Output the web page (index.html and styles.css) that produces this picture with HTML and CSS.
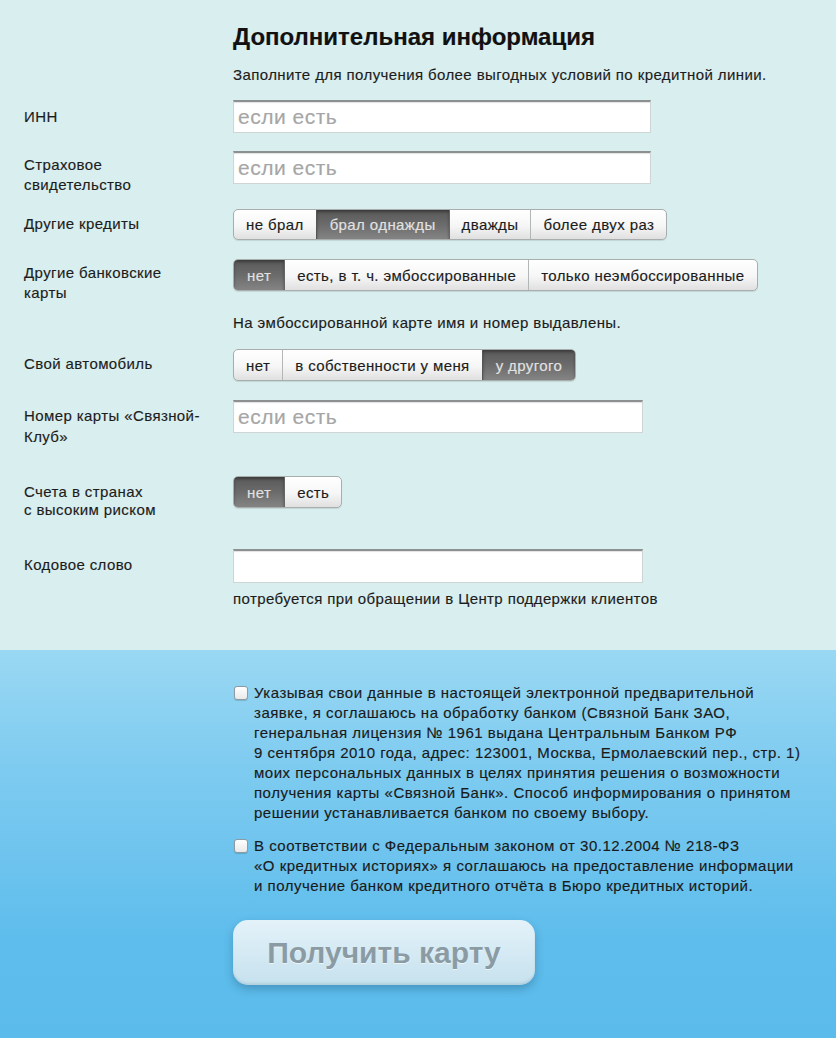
FILE: index.html
```html
<!DOCTYPE html>
<html lang="ru">
<head>
<meta charset="utf-8">
<title>Дополнительная информация</title>
<link rel="stylesheet" href="styles.css">
</head>
<body>
<div class="page">
  <section class="info">
    <div class="head">
      <h1 class="title">Дополнительная информация</h1>
      <p class="lead">Заполните для получения более выгодных условий по кредитной линии.</p>
    </div>

    <div class="row r-inn">
      <div class="label">ИНН</div>
      <input class="field w418" type="text" placeholder="если есть">
    </div>

    <div class="row r-snils">
      <div class="label">Страховое<br>свидетельство</div>
      <input class="field w418" type="text" placeholder="если есть">
    </div>

    <div class="row r-credits">
      <div class="label">Другие кредиты</div>
      <div class="seg seg-31">
        <span class="opt">не брал</span><span class="opt on">брал однажды</span><span class="opt">дважды</span><span class="opt">более двух раз</span>
      </div>
    </div>

    <div class="row r-cards">
      <div class="label">Другие банковские<br>карты</div>
      <div class="seg">
        <span class="opt on">нет</span><span class="opt">есть, в т. ч. эмбоссированные</span><span class="opt">только неэмбоссированные</span>
      </div>
    </div>
    <p class="note">На эмбоссированной карте имя и номер выдавлены.</p>

    <div class="row r-car">
      <div class="label">Свой автомобиль</div>
      <div class="seg">
        <span class="opt">нет</span><span class="opt">в собственности у меня</span><span class="opt on">у другого</span>
      </div>
    </div>

    <div class="row r-club">
      <div class="label">Номер карты «Связной-<br>Клуб»</div>
      <input class="field w410" type="text" placeholder="если есть">
    </div>

    <div class="row r-risk">
      <div class="label">Счета в странах<br>с высоким риском</div>
      <div class="seg">
        <span class="opt on">нет</span><span class="opt">есть</span>
      </div>
    </div>

    <div class="row r-code">
      <div class="label">Кодовое слово</div>
      <input class="field w410 tall" type="text">
    </div>
    <p class="hint">потребуется при обращении в Центр поддержки клиентов</p>
  </section>

  <section class="agree">
    <label class="check">
      <span class="box"></span>
      <span class="check-text">Указывая свои данные в настоящей электронной предварительной<br>заявке, я соглашаюсь на обработку банком (Связной Банк ЗАО,<br>генеральная лицензия № 1961 выдана Центральным Банком РФ<br>9 сентября 2010 года, адрес: 123001, Москва, Ермолаевский пер., стр. 1)<br>моих персональных данных в целях принятия решения о возможности<br>получения карты «Связной Банк». Способ информирования о принятом<br>решении устанавливается банком по своему выбору.</span>
    </label>
    <label class="check">
      <span class="box"></span>
      <span class="check-text">В соответствии с Федеральным законом от 30.12.2004 № 218-ФЗ<br>«О кредитных историях» я соглашаюсь на предоставление информации<br>и получение банком кредитного отчёта в Бюро кредитных историй.</span>
    </label>
    <button class="submit" type="button">Получить карту</button>
  </section>
</div>
</body>
</html>
```

FILE: styles.css
```css
* { box-sizing: border-box; }
html, body {
  margin: 0;
  padding: 0;
}
body {
  font-family: "Liberation Sans", Arial, sans-serif;
  font-size: 15px;
  letter-spacing: 0.4px;
  color: #1c1c1c;
  background: #5bbcec;
  -webkit-text-stroke: 0.15px currentColor;
}
.page {
  width: 836px;
  min-height: 1038px;
  display: flex;
  flex-direction: column;
}
.info {
  background: #d9eeee;
  padding: 0 0 0 24px;
  height: 650px;
}
.head {
  padding: 23px 0 0 209px;
}
.title {
  margin: 0;
  font-size: 24px;
  line-height: 28px;
  font-weight: bold;
  letter-spacing: 0;
  color: #111;
}
.lead {
  margin: 15px 0 0;
  line-height: 18px;
}
.row {
  display: grid;
  grid-template-columns: 209px max-content;
  align-items: start;
}
.label {
  line-height: 20px;
  white-space: nowrap;
}
.r-inn { margin-top: 16px; height: 33px; }
.r-inn .label { padding-top: 7px; }
.r-snils { margin-top: 18px; height: 33px; }
.r-snils .label { padding-top: 4px; }
.r-credits { margin-top: 25px; height: 31px; }
.r-credits .label { padding-top: 5px; }
.r-cards { margin-top: 19px; height: 32px; }
.r-cards .label { padding-top: 4px; }
.r-car { margin-top: 17px; height: 32px; }
.r-car .label { padding-top: 5px; }
.r-club { margin-top: 19px; height: 33px; }
.r-club .label { padding-top: 5px; line-height: 21px; }
.r-risk { margin-top: 43px; height: 32px; }
.r-risk .label { padding-top: 7px; line-height: 18px; }
.r-code { margin-top: 41px; height: 34px; }
.r-code .label { padding-top: 6px; }

.field {
  display: block;
  height: 33px;
  border: 1px solid #cfd4d4;
  border-top: 2px solid #8c9090;
  box-shadow: inset 0 1px 1px rgba(0,0,0,0.12);
  background: #fff;
  font-family: "Liberation Sans", Arial, sans-serif;
  font-size: 21px;
  letter-spacing: 0.5px;
  padding: 0 4px;
  color: #333;
  outline: none;
}
.field.tall { height: 34px; }
.field::placeholder { color: #a6a6a6; }
.w418 { width: 418px; }
.w410 { width: 410px; }

.seg {
  display: flex;
  height: 32px;
  border: 1px solid #a9adad;
  border-radius: 5px;
  overflow: hidden;
  background: linear-gradient(#ffffff, #f6f6f6 55%, #e0e0e0);
  box-shadow: 0 1px 1px rgba(0,0,0,0.1);
}
.seg-31 { height: 31px; }
.opt {
  display: flex;
  align-items: center;
  padding: 0 12px;
  color: #1c1c1c;
  border-left: 1px solid #b3b6b6;
}
.opt:first-child { border-left: 0; }
.opt.on {
  padding: 0 13px;
  background: linear-gradient(#595959, #6b6b6b 50%, #848484);
  color: #e2e2e2;
  border-left-color: #555;
  box-shadow: inset 0 2px 3px rgba(0,0,0,0.35);
}
.opt.on + .opt { border-left-color: #666; }

.note {
  margin: 23px 0 0 209px;
  line-height: 18px;
}
.hint {
  margin: 7px 0 0 209px;
  line-height: 18px;
}

.agree {
  flex: 1;
  background: linear-gradient(#9ad8f3, #7ecbf0 30%, #5ebdec 75%, #5bbbeb);
  padding: 33px 0 0 234px;
}
.check {
  display: flex;
  gap: 6px;
  line-height: 20px;
  color: #1a1a1a;
  white-space: nowrap;
  letter-spacing: 0.5px;
}
.check + .check { margin-top: 13px; }
.box {
  flex: none;
  width: 14px;
  height: 14px;
  margin-top: 3px;
  border: 1px solid #8d9aa2;
  border-radius: 3px;
  background: linear-gradient(#ffffff, #e9e9e9);
  box-shadow: 0 1px 1px rgba(0,0,0,0.15);
}
.submit {
  display: block;
  margin-top: 24px;
  margin-left: -1px;
  width: 302px;
  height: 65px;
  border: 0;
  border-radius: 15px;
  background: linear-gradient(#e4f2f9, #d5eaf4 50%, #c6e1ee);
  box-shadow: 0 4px 8px rgba(20,60,90,0.3), inset 0 -2px 2px rgba(120,160,180,0.25);
  font-family: "Liberation Sans", Arial, sans-serif;
  font-size: 30px;
  font-weight: bold;
  letter-spacing: 0;
  color: #8b9ba4;
  -webkit-text-stroke: 0;
  text-shadow: 0 1px 0 rgba(255,255,255,0.6);
  cursor: pointer;
}
```
